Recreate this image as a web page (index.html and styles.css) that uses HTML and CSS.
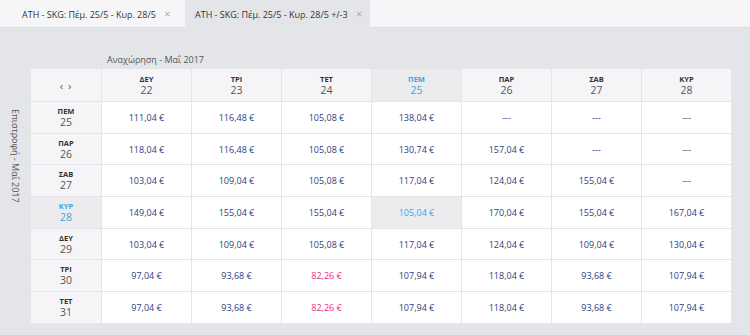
FILE: index.html
```html
<!DOCTYPE html>
<html lang="el">
<head>
  <meta charset="UTF-8">
  <title>Τιμές πτήσεων</title>
  <link rel="stylesheet" href="styles.css">
</head>
<body>
  <div class="tabs">
    <div class="tab">ATH - SKG: Πέμ. 25/5 - Κυρ. 28/5 <span class="close">×</span></div>
    <div class="tab active">ATH - SKG: Πέμ. 25/5 - Κυρ. 28/5 +/-3 <span class="close">×</span></div>
  </div>

  <div class="main">
    <div class="side-label">Επιστροφή - Μαΐ 2017</div>
    <div class="grid-wrap">
      <div class="grid-title">Αναχώρηση - Μαΐ 2017</div>
      <table class="grid">
        <thead>
          <tr>
            <th class="corner">&lsaquo; &rsaquo;</th>
            <th><span class="dow">ΔΕΥ</span><span class="num">22</span></th>
            <th><span class="dow">ΤΡΙ</span><span class="num">23</span></th>
            <th><span class="dow">ΤΕΤ</span><span class="num">24</span></th>
            <th class="sel"><span class="dow">ΠΕΜ</span><span class="num">25</span></th>
            <th><span class="dow">ΠΑΡ</span><span class="num">26</span></th>
            <th><span class="dow">ΣΑΒ</span><span class="num">27</span></th>
            <th><span class="dow">ΚΥΡ</span><span class="num">28</span></th>
          </tr>
        </thead>
        <tbody>
          <tr>
            <th><span class="dow">ΠΕΜ</span><span class="num">25</span></th>
            <td>111,04 €</td><td>116,48 €</td><td>105,08 €</td><td>138,04 €</td><td>---</td><td>---</td><td>---</td>
          </tr>
          <tr>
            <th><span class="dow">ΠΑΡ</span><span class="num">26</span></th>
            <td>118,04 €</td><td>116,48 €</td><td>105,08 €</td><td>130,74 €</td><td>157,04 €</td><td>---</td><td>---</td>
          </tr>
          <tr>
            <th><span class="dow">ΣΑΒ</span><span class="num">27</span></th>
            <td>103,04 €</td><td>109,04 €</td><td>105,08 €</td><td>117,04 €</td><td>124,04 €</td><td>155,04 €</td><td>---</td>
          </tr>
          <tr>
            <th class="sel"><span class="dow">ΚΥΡ</span><span class="num">28</span></th>
            <td>149,04 €</td><td>155,04 €</td><td>155,04 €</td><td class="sel">105,04 €</td><td>170,04 €</td><td>155,04 €</td><td>167,04 €</td>
          </tr>
          <tr>
            <th><span class="dow">ΔΕΥ</span><span class="num">29</span></th>
            <td>103,04 €</td><td>109,04 €</td><td>105,08 €</td><td>117,04 €</td><td>124,04 €</td><td>109,04 €</td><td>130,04 €</td>
          </tr>
          <tr>
            <th><span class="dow">ΤΡΙ</span><span class="num">30</span></th>
            <td>97,04 €</td><td>93,68 €</td><td class="low">82,26 €</td><td>107,94 €</td><td>118,04 €</td><td>93,68 €</td><td>107,94 €</td>
          </tr>
          <tr>
            <th><span class="dow">ΤΕΤ</span><span class="num">31</span></th>
            <td>97,04 €</td><td>93,68 €</td><td class="low">82,26 €</td><td>107,94 €</td><td>118,04 €</td><td>93,68 €</td><td>107,94 €</td>
          </tr>
        </tbody>
      </table>
    </div>
  </div>
</body>
</html>
```

FILE: styles.css
```css
body {
  margin: 0;
  font-family: 'Open Sans', sans-serif;
  font-size: 9px;
  color: #333;
  background-color: #e4e5e9;
}
.tabs {
  display: flex;
  height: 27px;
  background-color: #f6f6f8;
  border-bottom: 1px solid #dcdde1;
}
.tab {
  width: 185px;
  line-height: 27px;
  padding-left: 22px;
  box-sizing: border-box;
  color: #333;
  white-space: nowrap;
}
.tab.active {
  background-color: #e4e5e9;
  padding-left: 10px;
  height: 28px;
}
.close {
  color: #aaa;
  font-size: 11px;
  margin-left: 6px;
}
.main {
  display: flex;
  padding-top: 23px;
}
.side-label {
  width: 30px;
  padding-top: 58px;
  padding-right: 8px;
  box-sizing: border-box;
  writing-mode: vertical-rl;
  color: #555;
  white-space: nowrap;
}
.grid-title {
  padding-left: 77px;
  line-height: 17px;
  color: #555;
}
.grid {
  border-collapse: collapse;
  border: 1px solid #d3d4d8;
  background-color: #fff;
}
.grid th,
.grid td {
  border: 1px solid #e4e5e9;
  text-align: center;
  padding: 0;
  height: 30.7px;
}
.grid td {
  width: 89px;
  color: #2c3e80;
}
.grid thead th {
  background-color: #f5f5f8;
  height: 32px;
}
.grid tbody th {
  width: 70px;
  background-color: #f5f5f8;
}
.grid .corner {
  font-weight: normal;
  font-size: 11px;
  color: #555;
  letter-spacing: 1px;
}
.dow {
  display: block;
  font-size: 7.5px;
  font-weight: 700;
  line-height: 10px;
  color: #333;
}
.num {
  display: block;
  font-size: 10.5px;
  font-weight: normal;
  line-height: 13px;
  color: #555;
}
.grid th.sel,
.grid td.sel {
  background-color: #ececef;
}
.sel .dow,
.sel .num,
.grid td.sel {
  color: #3aa7e4;
}
.grid td.low {
  color: #e8307a;
}
```
